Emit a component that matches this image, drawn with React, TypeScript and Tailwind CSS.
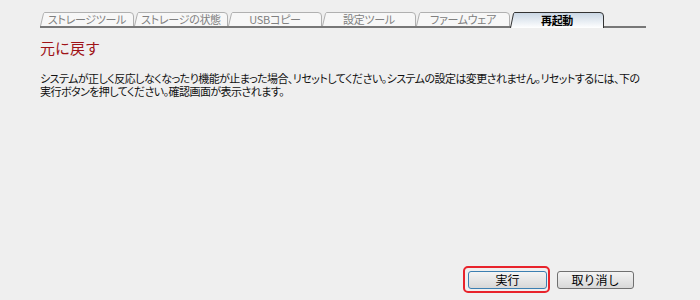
import React from "react";

const tabs = ["ストレージツール", "ストレージの状態", "USBコピー", "設定ツール", "ファームウェア", "再起動"];

function Tab({ label, active }: { label: string; active: boolean }) {
  const w = 94;
  const h = active ? 16 : 14;
  return (
    <div className={`relative flex items-center justify-center w-[94px] ${active ? "h-[16px] -mb-[2px] z-10" : "h-[14px]"}`}>
      <svg className="absolute inset-0" width={w} height={h} viewBox={`0 0 ${w} ${h}`}>
        <defs>
          <linearGradient id="actg" x1="0" y1="0" x2="0" y2="1">
            <stop offset="0" stopColor="#c9d6e4" />
            <stop offset="1" stopColor="#ffffff" />
          </linearGradient>
        </defs>
        <path
          d={`M0.5 ${h} L3.5 1.5 Q4 0.5 5 0.5 L${w - 4} 0.5 Q${w - 0.5} 0.5 ${w - 0.5} 4 L${w - 0.5} ${h}`}
          fill={active ? "url(#actg)" : "#f7f7f7"}
          stroke={active ? "#333333" : "#b0b0b0"}
          strokeWidth="1"
        />
      </svg>
      <span
        className={`relative text-[11px] leading-none tracking-[-0.3px] ${active ? "font-bold text-black" : "text-[#808080]"}`}
        style={{ fontFeatureSettings: '"palt"' }}
      >
        {label}
      </span>
    </div>
  );
}

export default function App() {
  return (
    <div
      className="w-[700px] h-[300px] bg-[#efefef] flex flex-col overflow-hidden"
      style={{ fontFamily: '"Noto Sans CJK JP", "Noto Sans", sans-serif' }}
    >
      <div className="ml-[40px] mr-[54px] mt-[12px] flex items-end border-b-2 border-[#777777]">
        {tabs.map((t, i) => (
          <Tab key={t} label={t} active={i === tabs.length - 1} />
        ))}
      </div>
      <h1 className="ml-[40px] mt-[10px] text-[15px] leading-[20px] text-[#a01418]">元に戻す</h1>
      <p
        className="ml-[40px] mt-[14px] text-[11px] leading-[13px] text-[#111] whitespace-nowrap tracking-[-0.55px]"
        style={{ fontFeatureSettings: '"palt"' }}
      >
        システムが正しく反応しなくなったり機能が止まった場合、リセットしてください。システムの設定は変更されません。リセットするには、下の
        <br />
        実行ボタンを押してください。確認画面が表示されます。
      </p>
      <div className="flex-1" />
      <div className="flex items-center justify-end mr-[66px] mb-[7px]">
        <div className="border-2 border-[#e8232b] rounded-[5px] pt-[3px] pl-[3px] pr-[1px] pb-[2px]">
          <button className="w-[79px] h-[18px] border border-[#3c7fb1] rounded-[3px] bg-gradient-to-b from-[#f4f4f4] to-[#d8d8d8] text-[12px] leading-none text-black flex items-center justify-center">
            実行
          </button>
        </div>
        <button className="ml-[7px] mt-[1px] w-[77px] h-[18px] border border-[#707070] rounded-[3px] bg-gradient-to-b from-[#f4f4f4] to-[#d8d8d8] text-[12px] leading-none text-black flex items-center justify-center">
          取り消し
        </button>
      </div>
    </div>
  );
}
